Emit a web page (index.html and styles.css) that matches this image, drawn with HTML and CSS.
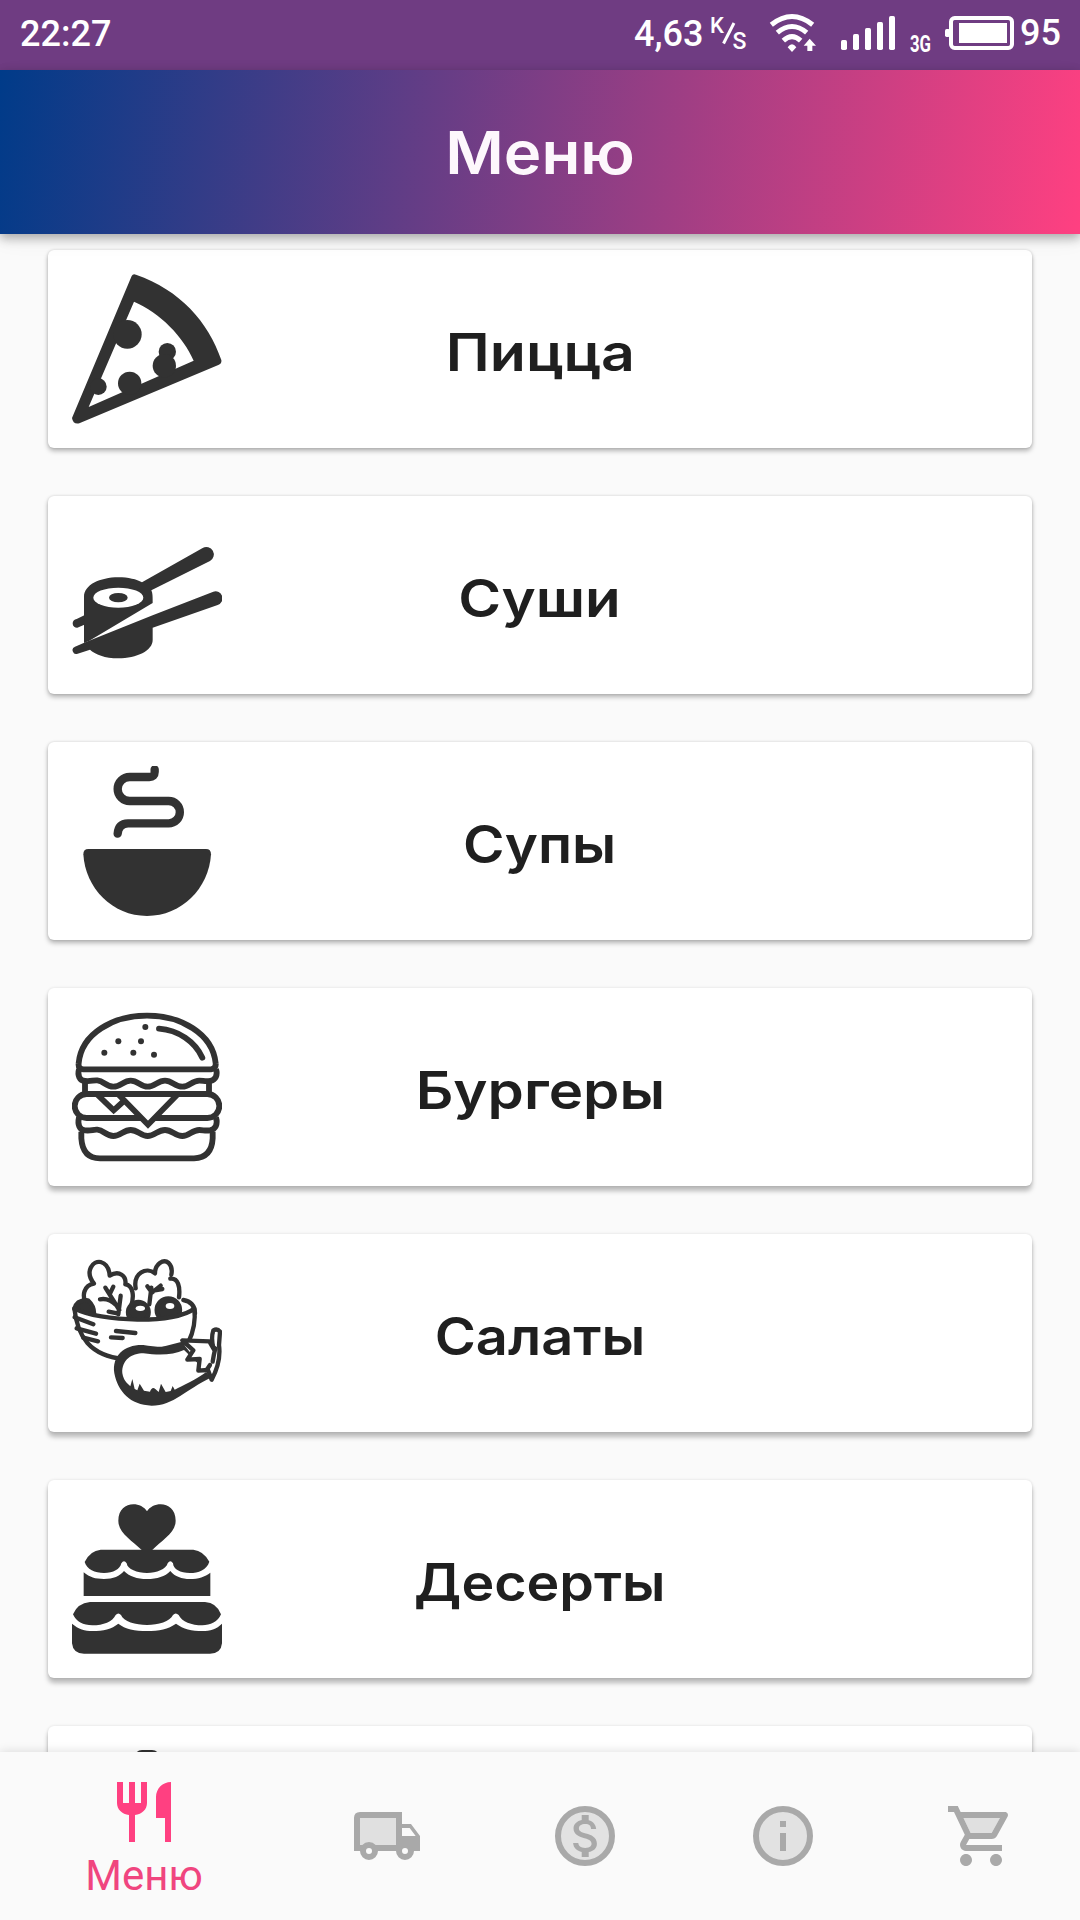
FILE: index.html
```html
<!DOCTYPE html>
<html lang="ru">
<head>
<meta charset="utf-8">
<title>Меню</title>
<link rel="stylesheet" href="styles.css">
</head>
<body>
<div class="screen">
  <div class="status">
    <span class="clock">22:27</span>
    <div class="indicators">
      <span class="speed">4,63</span>
      <svg class="unit" viewBox="0 0 38 42"><text x="0" y="19.500" font-size="22">K</text><path d="M13.500 30.500L24 10" stroke="#fff" stroke-width="3"/><text x="22.500" y="35.500" font-size="23">S</text></svg>
      <svg class="wifi" viewBox="507 36 144 126">
        <g fill="none" stroke="#fff" stroke-width="15"><path d="M514 74Q576 25 638 74"/><path d="M532 98Q576 61 620 98"/><path d="M550 122Q576 98 602 122"/></g>
        <path d="M563 142Q576 124 589 142L576 156zM629 116l19 21h-11v16h-15v-16h-11z"/>
      </svg>
      <svg class="signal" viewBox="723 48 162 102"><rect x="723" y="120" width="18" height="30" rx="5"/><rect x="759" y="102" width="18" height="48" rx="5"/><rect x="795" y="84" width="18" height="66" rx="5"/><rect x="831" y="66" width="18" height="84" rx="5"/><rect x="867" y="48" width="18" height="102" rx="5"/></svg>
      <svg class="network" viewBox="0 0 26 48"><text x="2" y="39" font-size="23" textLength="21" lengthAdjust="spacingAndGlyphs">3G</text></svg>
      <svg class="battery" viewBox="1035 48 207 102"><rect x="1053" y="54" width="183" height="90" rx="11" fill="none" stroke="#fff" stroke-width="12"/><rect x="1077" y="69" width="144" height="60"/><rect x="1035" y="87" width="15" height="24" rx="5"/></svg>
      <span class="percent">95</span>
    </div>
  </div>

  <header class="appbar"><h1 class="stretch title">Меню</h1></header>

  <main class="list">
    <section class="card">
      <svg class="pic" viewBox="96 102 450 450">
        <path fill-rule="evenodd" d="M275 108Q279 100 288 104C420 150 505 245 544 360Q546 371 535 375L118 550Q99 554 96 534zM282 185L146 501L461 362C430 290 360 218 282 185z"/>
        <circle cx="262" cy="283" r="43"/><circle cx="382" cy="335" r="26"/><circle cx="373" cy="377" r="35"/><circle cx="269" cy="430" r="35"/><circle cx="175" cy="440" r="25"/>
      </svg>
      <h2 class="stretch name pizza">Пицца</h2>
    </section>
    <section class="card">
      <svg class="pic" viewBox="96 60 450 450">
        <path d="M132 429V290C132 255 180 232 235 232C265 232 290 238 306 247L488 144A22 22 0 0 1 510 183L334 271C338 280 338 290 338 309L148 422z"/>
        <path d="M133 346L110 357A13 13 0 0 0 112 383L133 374z"/>
        <path d="M105 440L136 427L338 346L520 275A21 21 0 0 1 533 315L338 383V420C338 452 290 475 235 475C195 475 165 463 150 449L113 461A11 11 0 0 1 105 440z"/>
        <ellipse class="paper" cx="235" cy="293" rx="75" ry="30"/><ellipse cx="235" cy="293" rx="28" ry="14"/>
      </svg>
      <h2 class="stretch name sushi">Суши</h2>
    </section>
    <section class="card">
      <svg class="pic" viewBox="96 78 450 450">
        <path d="M344 88V96Q344 111 328 111H269A36 36 0 0 0 269 183H386A33 33 0 0 1 386 250H264Q235 251 233 281" fill="none" stroke="#323232" stroke-width="25" stroke-linecap="round"/>
        <path d="M145 327H498Q513 327 513 343C507 445 425 528 321 528S136 445 130 343Q130 327 145 327z"/>
      </svg>
      <h2 class="stretch name soup">Супы</h2>
    </section>
    <section class="card low">
      <svg class="pic line" viewBox="96 66 450 450">
        <path d="M130 238Q114 236 116 220C124 130 220 77 321 77S518 130 527 220Q529 236 513 238z"/>
        <path d="M135 275V310M507 275V310"/>
        <path d="M117 238C112 255 118 272 135 273C155 275 158 270 172 271C192 273 198 290 220 290S250 272 272 272S302 290 323 290S353 272 375 272S405 290 427 290S455 272 478 272C490 272 495 275 510 273C527 270 534 255 528 238"/>
        <path d="M117 382C112 403 118 420 135 421C155 423 158 418 172 419C192 421 198 438 220 438S250 420 272 420S302 438 323 438S353 420 375 420S405 438 427 438S455 420 478 420C490 420 495 423 510 421C527 418 534 403 528 382"/>
        <path d="M124 425V445Q128 505 180 505H462Q515 503 518 445V425"/>
        <rect x="104" y="312" width="434" height="72" rx="36"/>
        <path d="M170 312L221 361L255 330"/><path class="paper" d="M234 312L324 404L414 312z"/>
        <path d="M357 116C415 120 465 155 487 203" stroke-linecap="round"/>
        <g class="seeds"><circle cx="316" cy="111" r="9"/><circle cx="235" cy="154" r="9"/><circle cx="303" cy="154" r="9"/><circle cx="193" cy="188" r="9"/><circle cx="280" cy="188" r="9"/><circle cx="342" cy="194" r="9"/></g>
      </svg>
      <h2 class="stretch name burgers">Бургеры</h2>
    </section>
    <section class="card low">
      <svg class="pic sketch" viewBox="36 39 450 450">
        <path d="M86 190C58 150 75 120 102 116C72 78 100 46 122 51C143 57 148 76 149 92C178 74 200 94 196 118C220 120 223 155 213 184"/>
        <path d="M227 130C219 84 259 64 285 85C285 58 310 40 326 54C336 64 337 75 334 89M331 101C354 98 361 125 357 157M370 165C388 168 404 178 405 205"/>
        <path d="M175 208L182 152M136 128L178 195M120 163Q146 158 168 180M150 146L160 125M146 200L172 205M268 178L274 128M273 145L302 122M262 124L275 142M280 137L307 132"/>
        <path class="ink" d="M43 192Q50 164 84 166Q105 185 102 213Q65 205 43 192z"/>
        <circle class="ink" cx="235" cy="202" r="31"/><circle class="ink" cx="325" cy="195" r="35"/>
        <ellipse class="spot" cx="241" cy="190" rx="14" ry="8"/><ellipse class="spot" cx="330" cy="183" rx="13" ry="9"/>
        <path class="paper" d="M43 190C52 275 90 332 190 342L385 292C401 260 407 225 403 190C350 238 120 232 43 190z"/>
        <path d="M44 217L100 238M50 250L108 266M70 278L114 289M168 258L226 264M153 277L188 279"/>
        <path class="ink solid" d="M163 385C155 330 195 298 250 300C290 307 330 308 370 297L452 398C380 432 340 482 275 482C210 480 174 440 163 385z"/>
        <path class="spot" d="M187 385C185 345 215 325 250 325C300 332 340 330 372 315L440 380C405 405 370 420 344 434L338 423L332 438L317 441L303 416L296 441L286 432Q276 424 270 440L252 437L239 416L232 436L224 432L217 402L211 424L200 413Q190 403 187 385z"/>
        <path class="paper" d="M367 286L448 289L461 312Q452 280 460 256Q472 250 480 260L477 300Q484 350 455 404L444 375L415 377L419 342L382 344L400 316z"/>
        <path d="M458 350Q462 325 466 310M440 375L450 360"/>
      </svg>
      <h2 class="stretch name salads">Салаты</h2>
    </section>
    <section class="card low">
      <svg class="pic" viewBox="96 72 450 450">
        <path d="M321 94C340 62 407 62 407 122C407 160 365 180 336 211H306C275 180 235 160 235 122C235 62 302 62 321 94z"/>
        <path d="M182 209H460Q490 212 508 245C500 270 475 279 450 279C420 279 400 268 399 250Q391 237 383 250C378 268 350 279 321 279S262 268 260 250Q252 237 244 250C240 268 220 279 192 279C165 279 140 268 134 246Q150 212 182 209z"/>
        <path d="M131 277C150 292 165 297 192 297C220 297 240 288 252 273C270 290 290 297 321 297S375 290 391 273C405 290 425 297 450 297C475 297 495 290 511 278V348H131z"/>
        <path d="M150 366H495Q530 368 543 403C535 425 510 436 487 436C455 436 425 425 416 405Q407 396 399 405C390 425 355 435 321 435S250 425 243 405Q235 396 227 405C218 425 190 436 157 436C130 436 108 425 99 403Q112 370 150 366z"/>
        <path d="M96 431C115 447 135 453 157 453C190 453 215 447 235 431C255 447 285 453 321 453S385 447 408 431C430 447 455 453 487 453C510 453 530 447 546 431V490Q543 521 510 521H132Q99 521 96 490z"/>
      </svg>
      <h2 class="stretch name desserts">Десерты</h2>
    </section>
    <section class="card low">
      <svg class="pic" viewBox="0 0 150 150"><path d="M64 3Q66 0 70 0H80Q84 0 86 3V30H64z"/></svg>
    </section>
  </main>

  <nav class="tabs">
    <a class="tab active">
      <svg class="glyph" viewBox="324 228 216 216"><path d="M351 246h18v63h18v-63h18v63h18v-63h18v63c0 19-15 34-36 36v81h-18v-81c-21-2-36-17-36-36zM513 246v180h-18v-72h-27v-63c0-25 20-45 45-45z"/></svg>
      <span class="label">Меню</span>
    </a>
    <a class="tab">
      <svg class="glyph" viewBox="1053 300 216 216"><path class="tint" d="M1078 352h112v85h-112z"/><path fill-rule="evenodd" d="M1080 336h126v36h27l27 36v45h-18a27 27 0 0 1-54 0h-54a27 27 0 0 1-54 0h-18V354q0-18 18-18zM1080 354v81h7a27 27 0 0 1 40 0h61v-81zM1206 384v24h41l-18-24zM1098 453a9 9 0 0 0 18 0a9 9 0 0 0-18 0zM1206 453a9 9 0 0 0 18 0a9 9 0 0 0-18 0z"/></svg>
    </a>
    <a class="tab">
      <svg class="glyph" viewBox="0 0 24 24"><circle class="disc" cx="12" cy="12" r="9"/><path d="M12.310 11.140c-1.770-.45-2.340-.94-2.340-1.670 0-.84.79-1.430 2.100-1.430 1.380 0 1.900.66 1.940 1.640h1.710c-.05-1.340-.87-2.570-2.490-2.970V5H10.900v1.690c-1.510.32-2.720 1.300-2.720 2.810 0 1.790 1.490 2.690 3.660 3.210 1.950.46 2.340 1.150 2.340 1.870 0 .53-.39 1.390-2.100 1.390-1.600 0-2.230-.72-2.320-1.640H8.040c.1 1.700 1.360 2.660 2.860 2.970V19h2.340v-1.670c1.520-.29 2.720-1.160 2.730-2.770-.01-2.200-1.900-2.960-3.660-3.420z"/></svg>
    </a>
    <a class="tab">
      <svg class="glyph" viewBox="0 0 24 24"><circle class="disc" cx="12" cy="12" r="9"/><path d="M11 7h2v2h-2zM11 11h2v6h-2z"/></svg>
    </a>
    <a class="tab">
      <svg class="glyph" viewBox="0 0 24 24"><path class="tint" d="M6.160 6h12.150l-2.760 5H8.530z"/><path d="M15.550 13c.75 0 1.410-.41 1.750-1.030l3.580-6.490c.37-.66-.11-1.480-.87-1.480H5.210l-.94-2H1v2h2l3.600 7.590-1.350 2.440C4.520 15.370 5.480 17 7 17h12v-2H7l1.100-2h7.450zM6.160 6h12.150l-2.760 5H8.530L6.160 6zM7 18c-1.100 0-1.990.9-1.990 2S5.900 22 7 22s2-.9 2-2-.9-2-2-2zm10 0c-1.100 0-1.990.9-1.990 2s.89 2 1.990 2 2-.9 2-2-.9-2-2-2z"/></svg>
    </a>
  </nav>
</div>
</body>
</html>
```
FILE: styles.css
```css
* { box-sizing: border-box; }
body { margin: 0; background: #fafafa; font-family: Roboto, "Liberation Sans", sans-serif; }
svg { display: block; flex: none; }
.screen { width: 1080px; height: 1920px; display: flex; flex-direction: column; overflow: hidden; }

.status {
  height: 70px; flex: none; background: #6f3c82; color: #fff; fill: #fff;
  display: flex; align-items: flex-start; justify-content: space-between;
  padding: 13px 20px 0; font-size: 36px; font-weight: 500; line-height: 42px;
}
.indicators { display: flex; }
.speed { width: 70px; }
.unit { width: 38px; height: 42px; margin-left: 6px; }
.wifi { width: 48px; height: 42px; margin: -1px 0 0 21px; }
.signal { width: 54px; height: 34px; margin: 3px 0 0 24px; }
.network { width: 26px; height: 48px; margin-left: 13px; font-weight: 700; }
.battery { width: 69px; height: 34px; margin: 3px 0 0 11px; }
.percent { width: 40px; margin: -1px 0 0 6px; }

.appbar {
  height: 164px; flex: none; z-index: 2;
  display: flex; align-items: center; justify-content: center;
  background: linear-gradient(99deg, #003b89, #ff4081);
  box-shadow: 0 4px 10px rgba(0, 0, 0, .3), 0 6px 20px rgba(0, 0, 0, .06);
}
.stretch {
  margin: 0; font-family: Inter, "Open Sans", sans-serif; font-weight: 600; white-space: nowrap;
  transform: scaleX(var(--wide, 1));
}
.title { font-size: 59px; line-height: 72px; padding-top: 2px; color: #fdf7fc; --wide: 1.077; }

.list {
  flex: 1; min-height: 0; overflow: hidden;
  display: flex; flex-direction: column; gap: 48px; padding: 16px 48px 0;
}
.card {
  height: 198px; flex: none; border-radius: 6px; background: #fff;
  display: grid; grid-template-columns: 150px 1fr 150px; align-items: center;
  padding: 0 24px;
  box-shadow: 0 3px 5px rgba(0, 0, 0, .28), 0 0 3px rgba(0, 0, 0, .14);
}
.card.low { box-shadow: 0 5px 5px rgba(0, 0, 0, .26), 0 0 3px rgba(0, 0, 0, .12); }
.pic { width: 150px; height: 150px; fill: #323232; }
.pic .paper, .pic .spot { fill: #fff; }
.line { fill: none; stroke: #323232; stroke-width: 17.5; }
.seeds { fill: #323232; stroke: none; }
.sketch { fill: none; stroke: #323232; stroke-width: 13; stroke-linecap: round; stroke-linejoin: round; }
.sketch .ink { fill: #323232; }
.sketch .solid, .sketch .spot { stroke: none; }
.name { justify-self: center; padding-top: 7px; font-size: 52px; line-height: 64px; color: #1f1f1f; }
.pizza { --wide: 1.135; }
.sushi { --wide: 1.12; }
.soup { --wide: 1.085; }
.burgers { --wide: 1.12; }
.salads { --wide: 1.075; }
.desserts { --wide: 1.067; }

.tabs {
  height: 168px; flex: none; z-index: 2; display: flex; background: #fafafa;
  box-shadow: 0 0 10px rgba(0, 0, 0, .14);
}
.tab { width: 198px; display: flex; flex-direction: column; align-items: center; padding-top: 48px; fill: #a9a9a9; }
.tab.active { width: 288px; padding-top: 24px; fill: #ff4081; color: #f0457f; }
.glyph { width: 72px; height: 72px; }
.tint { fill: #e0e0e0; }
.disc { fill: #e2e2e2; stroke: #a9a9a9; stroke-width: 2; }
.label { font-size: 42px; line-height: 50px; margin-top: 3px; }
```
